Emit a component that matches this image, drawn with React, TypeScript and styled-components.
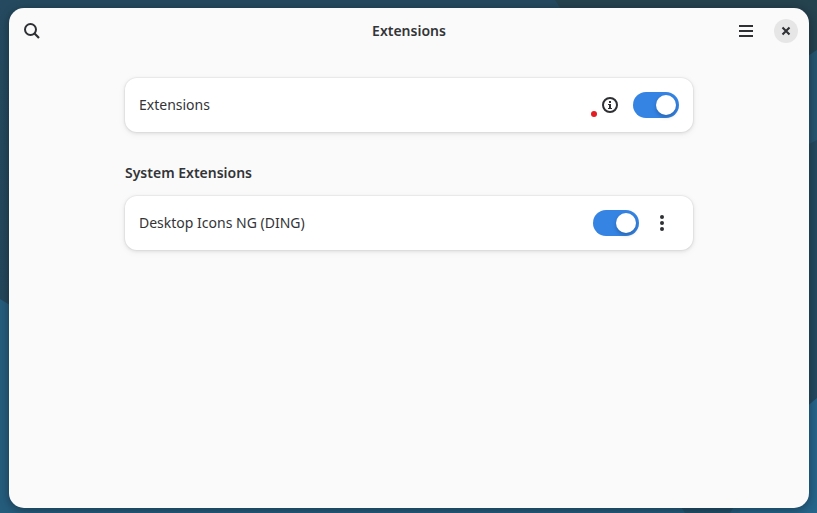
import React from "react";
import styled, { createGlobalStyle } from "styled-components";

const Global = createGlobalStyle`
  *, *::before, *::after { box-sizing: border-box; }
  body {
    margin: 0;
    background: #24485d;
    color: #333437;
    font-family: "Noto Sans", "Open Sans", sans-serif;
    font-size: 14px;
    line-height: 20px;
  }
`;

const Desktop = styled.div`
  position: relative;
  display: flex;
  min-height: 100vh;
  padding: 8px 8px 5px 9px;
  overflow: hidden;
`;

const Wallpaper = styled.svg`
  position: absolute;
  inset: 0;
  width: 100%;
  height: 100%;
`;

const Window = styled.main`
  position: relative;
  flex: 1;
  min-width: 0;
  border-radius: 15px;
  background: #fafafa;
  box-shadow: 0 2px 8px 1px rgba(0, 0, 0, 0.3);
`;

const HeaderBar = styled.header`
  display: grid;
  grid-template-columns: 1fr auto 1fr;
  align-items: center;
  height: 46px;
  padding: 0 6px;
`;

const Title = styled.h1`
  margin: 0;
  font-size: 14px;
  font-weight: 600;
`;

const Controls = styled.div`
  display: flex;
  justify-content: flex-end;
  gap: 6px;
`;

const IconButton = styled.button`
  display: flex;
  align-items: center;
  justify-content: center;
  width: 34px;
  height: 34px;
  padding: 0;
  border: 0;
  border-radius: 8px;
  background: transparent;
  color: #2e3034;
`;

const CloseDisc = styled.span`
  display: flex;
  align-items: center;
  justify-content: center;
  width: 24px;
  height: 24px;
  border-radius: 50%;
  background: #e6e6e6;
`;

const Content = styled.div`
  width: 100%;
  max-width: 592px;
  margin: 0 auto;
  padding: 24px 12px;
`;

const Section = styled.section`
  & + & { margin-top: 31px; }
`;

const SectionTitle = styled.h2`
  margin: 0 0 13px;
  font-size: 14px;
  font-weight: 600;
  line-height: 20px;
`;

const Card = styled.div`
  display: flex;
  align-items: center;
  min-height: 54px;
  padding: 0 14px;
  border-radius: 12px;
  background: #fff;
  box-shadow: 0 0 0 1px rgba(0, 0, 0, 0.03), 0 1px 3px 1px rgba(0, 0, 0, 0.07),
    0 2px 6px 2px rgba(0, 0, 0, 0.03);
`;

const RowLabel = styled.label`
  flex: 1;
`;

const Actions = styled.div`
  display: flex;
  align-items: center;
  gap: 6px;
`;

const InfoWrap = styled.div`
  position: relative;
`;

const Dot = styled.span`
  position: absolute;
  left: -2px;
  bottom: 5px;
  width: 6px;
  height: 6px;
  border-radius: 50%;
  background: #e31b23;
`;

const Switch = styled.input`
  appearance: none;
  display: flex;
  align-items: center;
  width: 46px;
  height: 26px;
  margin: 0;
  padding: 3px;
  border-radius: 13px;
  background: #c8c8c8;

  &::before {
    content: "";
    width: 20px;
    height: 20px;
    border-radius: 50%;
    background: #fff;
    box-shadow: 0 2px 4px rgba(0, 0, 0, 0.25);
  }

  &:checked {
    justify-content: flex-end;
    background: #3584e4;
  }
`;

export default function App() {
  return (
    <>
      <Global />
      <Desktop>
        <Wallpaper viewBox="0 0 817 513" preserveAspectRatio="none" aria-hidden="true">
          <defs>
            <linearGradient id="dusk" x1="0" y1="0" x2="0" y2="1">
              <stop offset="0" stopColor="#254a60" />
              <stop offset="0.6" stopColor="#24465a" />
              <stop offset="1" stopColor="#235675" />
            </linearGradient>
          </defs>
          <rect width="817" height="513" fill="url(#dusk)" />
          <path d="M555 0H817V50L740 100H620Z" fill="#25424f" />
          <path d="M817 50L740 100V230H817Z" fill="#265570" />
          <path d="M817 140L740 180V460L817 398Z" fill="#25495f" />
          <path d="M0 299L150 390V513H0Z" fill="#255c7c" />
          <path d="M100 440H817V513H100Z" fill="#255c7c" />
          <path d="M817 398L740 462V513H817Z" fill="#266489" />
          <path d="M670 490H745L730 513H685Z" fill="#22506a" />
        </Wallpaper>
        <Window>
          <HeaderBar>
            <IconButton aria-label="Search">
              <svg width="16" height="16" viewBox="0 0 16 16" fill="none" stroke="currentColor" strokeWidth="2">
                <circle cx="6.5" cy="6.5" r="5.5" />
                <path d="M10.3 10.3L15 15" strokeWidth="2.2" />
              </svg>
            </IconButton>
            <Title>Extensions</Title>
            <Controls>
              <IconButton aria-label="Main menu">
                <svg width="16" height="16" viewBox="0 0 16 16" fill="currentColor">
                  <path d="M1 2h14v2H1zM1 7h14v2H1zM1 12h14v2H1z" />
                </svg>
              </IconButton>
              <IconButton aria-label="Close">
                <CloseDisc>
                  <svg width="16" height="16" viewBox="0 0 16 16" fill="none" stroke="currentColor" strokeWidth="2.1">
                    <path d="M4.5 4.5l7 7M11.5 4.5l-7 7" />
                  </svg>
                </CloseDisc>
              </IconButton>
            </Controls>
          </HeaderBar>
          <Content>
            <Section>
              <Card>
                <RowLabel htmlFor="all-extensions">Extensions</RowLabel>
                <Actions>
                  <InfoWrap>
                    <IconButton aria-label="Information">
                      <svg width="16" height="16" viewBox="0 0 16 16" fill="none" stroke="currentColor">
                        <circle cx="8" cy="8" r="7" strokeWidth="2" />
                        <path d="M7 4h2v2H7zM6 7h3v4h1v1H6v-1h1V8H6z" fill="currentColor" stroke="none" />
                      </svg>
                    </IconButton>
                    <Dot />
                  </InfoWrap>
                  <Switch type="checkbox" role="switch" id="all-extensions" defaultChecked />
                </Actions>
              </Card>
            </Section>
            <Section>
              <SectionTitle>System Extensions</SectionTitle>
              <Card>
                <RowLabel htmlFor="ding">Desktop Icons NG (DING)</RowLabel>
                <Actions>
                  <Switch type="checkbox" role="switch" id="ding" defaultChecked />
                  <IconButton aria-label="More options">
                    <svg width="16" height="16" viewBox="0 0 16 16" fill="currentColor">
                      <circle cx="8" cy="2" r="2" />
                      <circle cx="8" cy="8" r="2" />
                      <circle cx="8" cy="14" r="2" />
                    </svg>
                  </IconButton>
                </Actions>
              </Card>
            </Section>
          </Content>
        </Window>
      </Desktop>
    </>
  );
}
